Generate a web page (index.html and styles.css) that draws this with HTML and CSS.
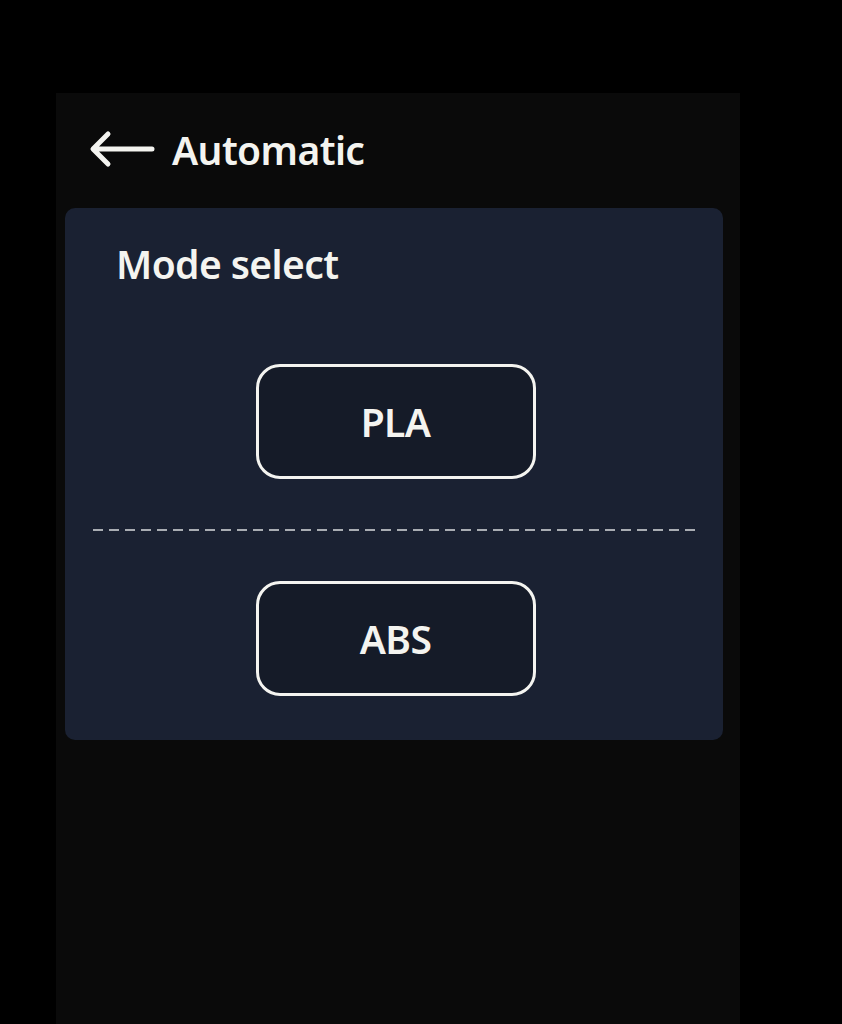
FILE: index.html
```html
<!DOCTYPE html>
<html>
<head>
<meta charset="utf-8">
<link rel="stylesheet" href="styles.css">
</head>
<body>
<div class="screen">
  <div class="header">
    <svg class="back" width="70" height="40" viewBox="0 0 70 40">
      <path d="M64 19 H6 M20 4 L5 19 L20 34" fill="none" stroke="#f4f4f0" stroke-width="5" stroke-linecap="round" stroke-linejoin="round"/>
    </svg>
    <span class="title">Automatic</span>
  </div>
  <div class="card">
    <div class="card-title">Mode select</div>
    <div class="options">
      <div class="btn-row"><button class="mode-btn">PLA</button></div>
      <div class="divider"></div>
      <div class="btn-row"><button class="mode-btn">ABS</button></div>
    </div>
  </div>
</div>
</body>
</html>
```
FILE: styles.css
```css
html, body {
  margin: 0;
  padding: 0;
  background: #000;
  height: 1024px;
  overflow: hidden;
}
.screen {
  margin-left: 56px;
  margin-top: 93px;
  width: 684px;
  height: 931px;
  background: #0a0a0a;
  font-family: "Noto Sans", "Open Sans", sans-serif;
  color: #f4f4f0;
}
.header {
  height: 115px;
  display: flex;
  align-items: center;
  padding-left: 32px;
  gap: 14px;
  box-sizing: border-box;
  padding-bottom: 2px;
}
.back {
  display: block;
}
.title {
  font-size: 39px;
  font-weight: 600;
  letter-spacing: -0.6px;
}
.card {
  margin-left: 9px;
  width: 658px;
  height: 532px;
  background: #1a2132;
  border-radius: 10px;
  box-sizing: border-box;
  padding-top: 34px;
}
.card-title {
  padding-left: 51px;
  font-size: 39px;
  font-weight: 600;
  letter-spacing: -0.6px;
  line-height: 44px;
}
.options {
  margin-top: 78px;
}
.btn-row {
  display: flex;
  justify-content: center;
  padding-left: 3px;
}
.mode-btn {
  width: 280px;
  height: 115px;
  background: #151b28;
  border: 3px solid #f4f4f0;
  border-radius: 24px;
  color: #f4f4f0;
  font-family: "Noto Sans", "Open Sans", sans-serif;
  font-size: 39px;
  font-weight: 600;
  letter-spacing: -0.6px;
  padding: 0;
}
.divider {
  margin: 50px 26px 50px 28px;
  height: 2px;
  background-image: linear-gradient(to right, #a9adb3 0, #a9adb3 10px, transparent 10px);
  background-size: 16px 2px;
  background-repeat: repeat-x;
}
```
